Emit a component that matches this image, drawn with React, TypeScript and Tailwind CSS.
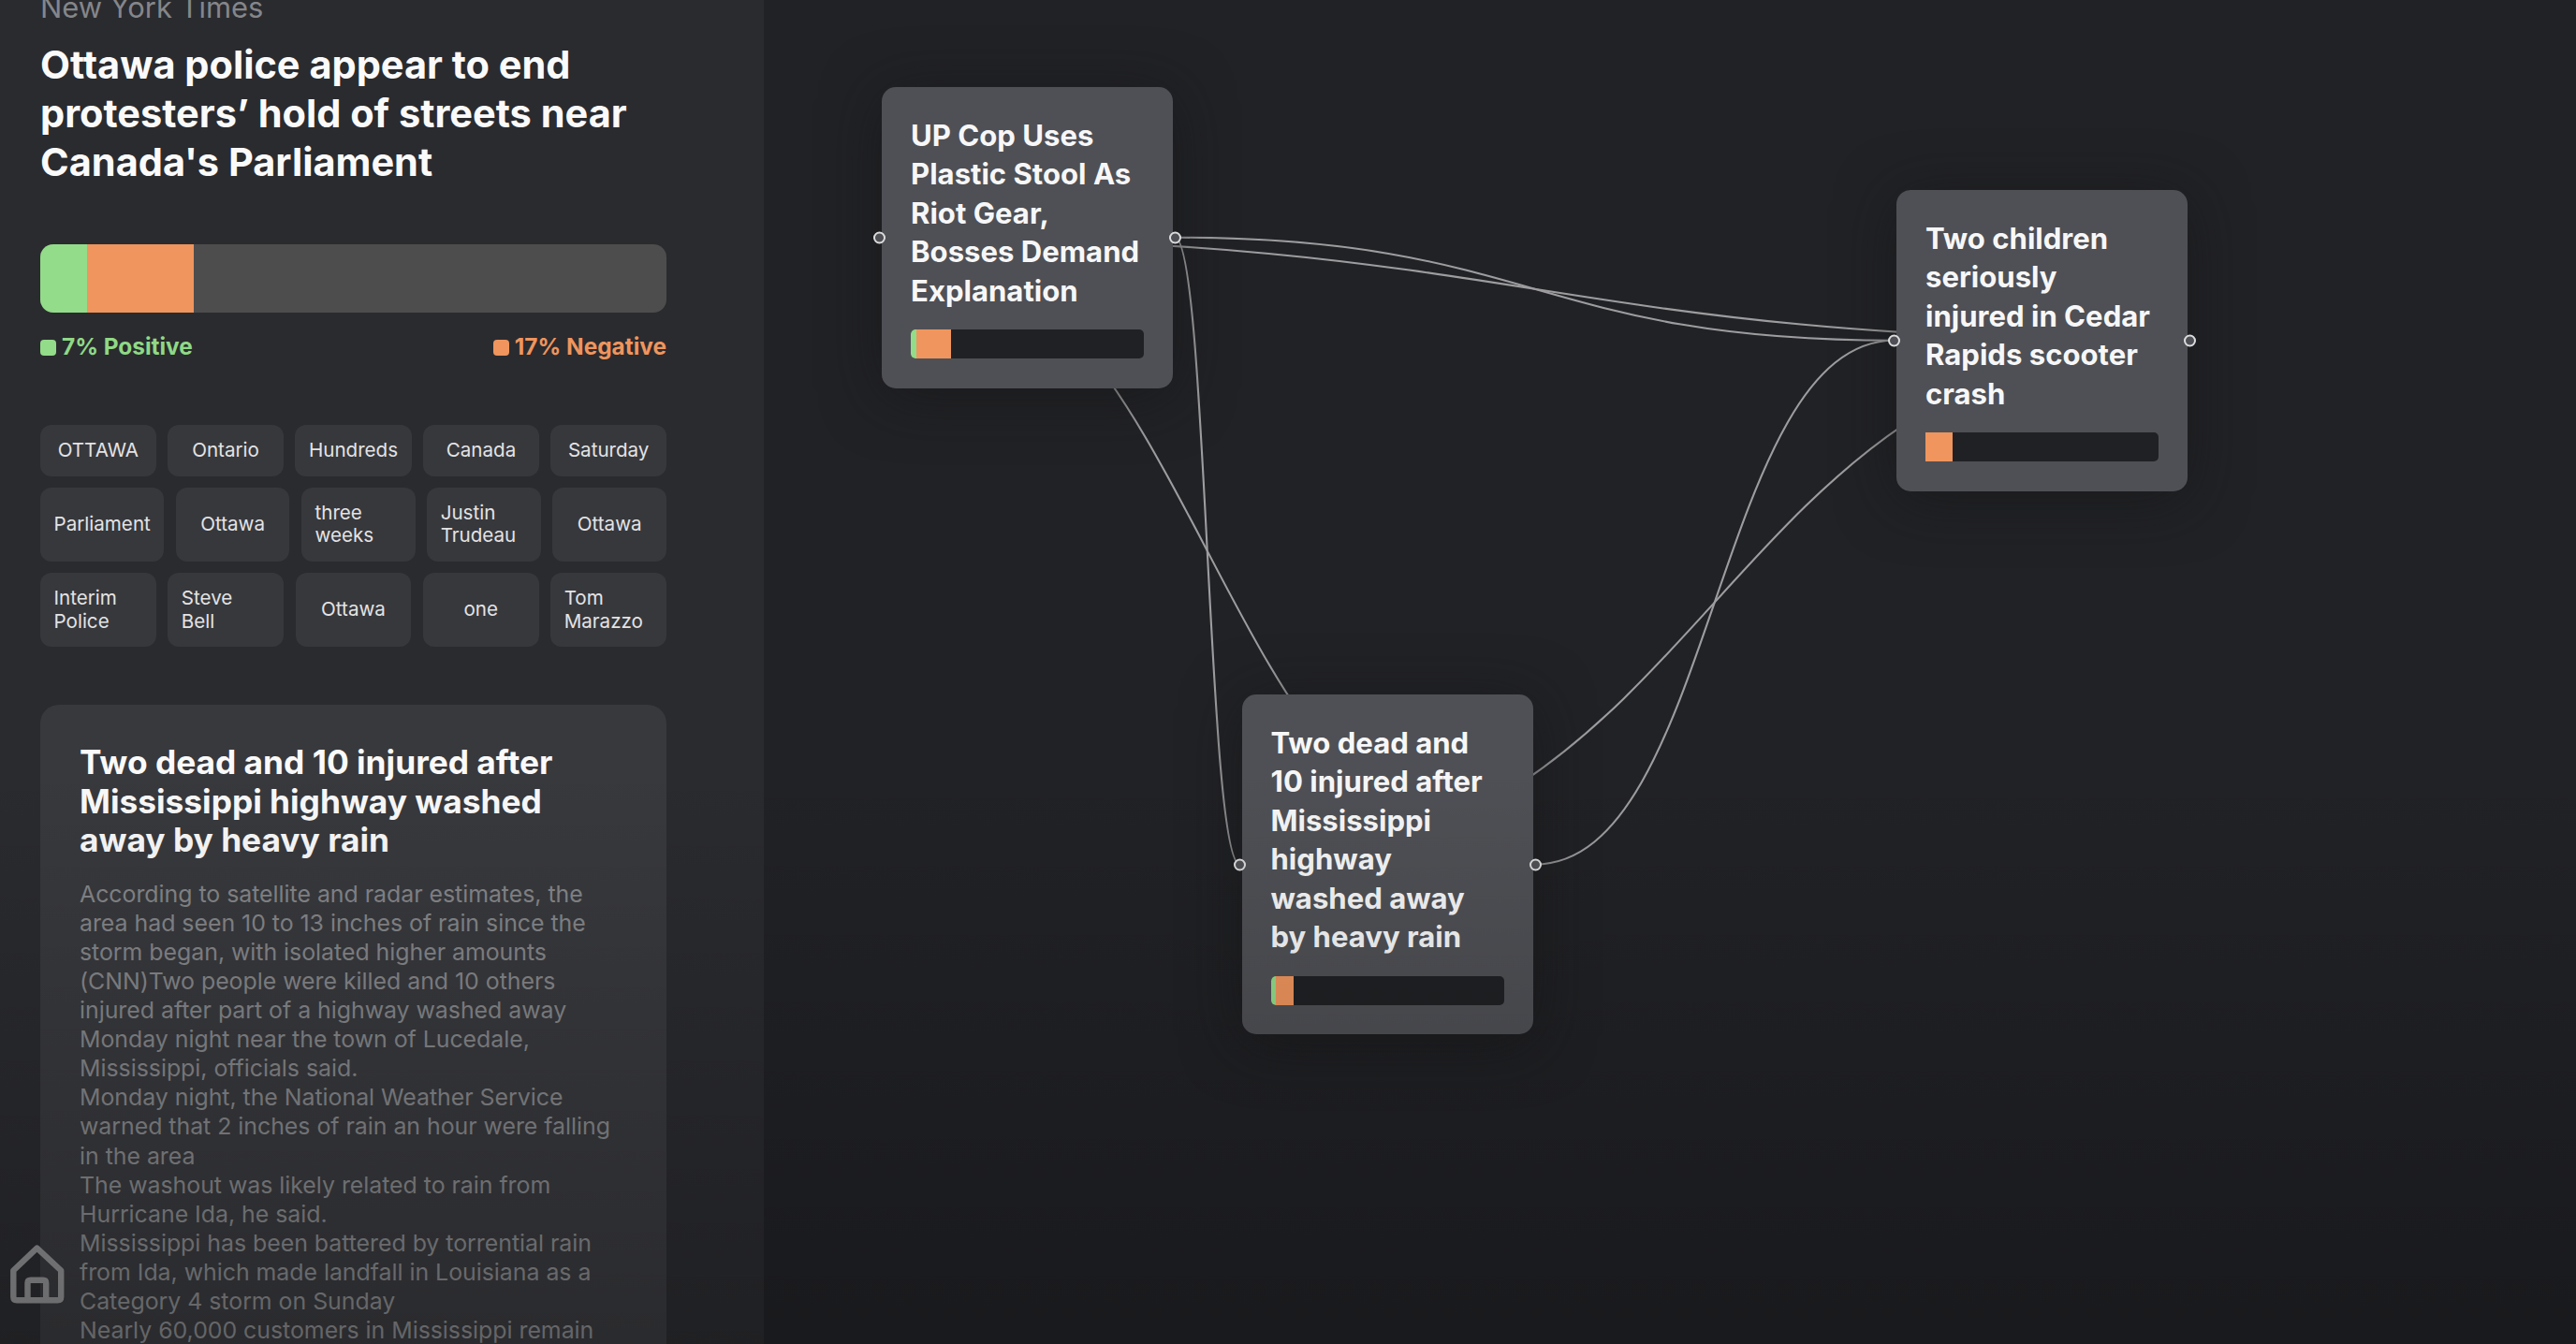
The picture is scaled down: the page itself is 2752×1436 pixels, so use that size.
import React from "react";

type StoryNode = {
  id: string;
  title: string;
  x: number;
  y: number;
  height: number;
  positive: number;
  negative: number;
};

const tagRows = [
  ["OTTAWA", "Ontario", "Hundreds", "Canada", "Saturday"],
  ["Parliament", "Ottawa", "three weeks", "Justin Trudeau", "Ottawa"],
  ["Interim Police", "Steve Bell", "Ottawa", "one", "Tom Marazzo"],
];

const summary = [
  "According to satellite and radar estimates, the area had seen 10 to 13 inches of rain since the storm began, with isolated higher amounts",
  "(CNN)Two people were killed and 10 others injured after part of a highway washed away Monday night near the town of Lucedale, Mississippi, officials said.",
  "Monday night, the National Weather Service warned that 2 inches of rain an hour were falling in the area",
  "The washout was likely related to rain from Hurricane Ida, he said.",
  "Mississippi has been battered by torrential rain from Ida, which made landfall in Louisiana as a Category 4 storm on Sunday",
  "Nearly 60,000 customers in Mississippi remain",
];

const NODE_WIDTH = 311;

const nodes: StoryNode[] = [
  {
    id: "stool",
    title: "UP Cop Uses Plastic Stool As Riot Gear, Bosses Demand Explanation",
    x: 942,
    y: 93,
    height: 321.5,
    positive: 2.4,
    negative: 14.7,
  },
  {
    id: "scooter",
    title: "Two children seriously injured in Cedar Rapids scooter crash",
    x: 2026,
    y: 203,
    height: 321.5,
    positive: 0,
    negative: 11.7,
  },
  {
    id: "highway",
    title: "Two dead and 10 injured after Mississippi highway washed away by heavy rain",
    x: 1326.5,
    y: 742,
    height: 363,
    positive: 2.2,
    negative: 7.7,
  },
];

const links = [
  ["stool", "scooter"],
  ["stool", "highway"],
  ["scooter", "stool"],
  ["scooter", "highway"],
  ["highway", "stool"],
  ["highway", "scooter"],
];

// bezier from the right handle of the source to the left handle of the target
function edgePath(from: string, to: string) {
  const a = nodes.find((n) => n.id === from)!;
  const b = nodes.find((n) => n.id === to)!;
  const sx = a.x + NODE_WIDTH + 2;
  const sy = a.y + a.height / 2;
  const tx = b.x - 2;
  const ty = b.y + b.height / 2;
  const mid = (sx + tx) / 2;
  return `M${sx},${sy} C${mid},${sy} ${mid},${ty} ${tx},${ty}`;
}

function NodeCard({ node }: { node: StoryNode }) {
  return (
    <div
      className="absolute flex w-[311px] flex-col rounded-[15px] bg-[#4f5055] px-[31px] pt-[31.5px] shadow-[0_8px_62px_rgba(22,22,22,0.6)]"
      style={{ left: node.x, top: node.y, height: node.height }}
    >
      <h3 className="text-[31.1px] leading-[41.5px] font-bold text-[#f7f7f8]">
        {node.title}
      </h3>
      <div className="mt-[20px] flex h-[31px] shrink-0 rounded-[5px] bg-[#202124]">
        <div
          className="rounded-l-[5px] bg-[#93dc8a]"
          style={{ width: `${node.positive}%` }}
        />
        <div className="bg-[#ef955d]" style={{ width: `${node.negative}%` }} />
      </div>
      <span className="absolute top-1/2 -left-[9px] size-[13px] -translate-y-1/2 rounded-full border-[2.5px] border-[#dcdcdd] bg-[#4f5055]" />
      <span className="absolute top-1/2 -right-[9px] size-[13px] -translate-y-1/2 rounded-full border-[2.5px] border-[#dcdcdd] bg-[#4f5055]" />
    </div>
  );
}

function Sidebar() {
  return (
    <aside className="w-[816px] shrink-0 overflow-hidden bg-[#2a2b2f] pl-[43px]">
      <div className="-mt-[12px] w-[669px]">
        <p className="text-[30.9px] leading-[39px] text-[#85868a]">
          New York Times
        </p>
        <h1 className="mt-[17px] text-[41.5px] leading-[51.9px] font-bold text-[#fafafa]">
          Ottawa police appear to end protesters’ hold of streets near Canada's
          Parliament
        </h1>

        <div className="mt-[61.5px] flex h-[73px] overflow-hidden rounded-[14px] bg-[#4d4d4d]">
          <div className="w-[50px] bg-[#93dc8a]" />
          <div className="w-[114px] bg-[#ef955d]" />
        </div>
        <div className="mt-[21px] flex justify-between text-[24.4px] leading-[31px] font-bold">
          <span className="flex items-center gap-[6px] text-[#8fd986]">
            <i className="mt-[2px] size-[17px] rounded-[4px] bg-[#93dc8a]" />
            7% Positive
          </span>
          <span className="flex items-center gap-[6px] text-[#ef955d]">
            <i className="mt-[2px] size-[17px] rounded-[4px] bg-[#ef955d]" />
            17% Negative
          </span>
        </div>

        <div className="mt-[68px] flex flex-col gap-[12px]">
          {tagRows.map((row, i) => (
            <div key={i} className="flex gap-[12.5px]">
              {row.map((tag, j) => (
                <div
                  key={j}
                  className="flex flex-1 items-center justify-center rounded-[12px] bg-[#37383c] px-[14.5px] py-[15px] text-[20.6px] leading-[24.6px] text-[#e3e3e4]"
                >
                  {tag}
                </div>
              ))}
            </div>
          ))}
        </div>

        <article className="mt-[62px] h-[760px] rounded-[20px] bg-[#38393d] px-[42px] pt-[41px]">
          <h2 className="text-[35.3px] leading-[41.5px] font-bold text-[#fafafa]">
            Two dead and 10 injured after Mississippi highway washed away by
            heavy rain
          </h2>
          <div className="mt-[21px] text-[24.9px] leading-[31.1px] tracking-[-0.03px] text-[#858689]">
            {summary.map((line) => (
              <p key={line}>{line}</p>
            ))}
          </div>
        </article>
      </div>
    </aside>
  );
}

function HomeIcon() {
  return (
    <svg
      className="absolute top-[1326px] left-[8px] h-[70px] w-[64px]"
      viewBox="8 1326 64 70"
      fill="none"
      stroke="#8d8e90"
      strokeWidth="6.4"
      strokeLinejoin="round"
    >
      <path d="M39.5 1333.5 L65.2 1357.5 V1385.5 Q65.2 1389.3 61.4 1389.3 H18 Q14.3 1389.3 14.3 1385.5 V1357.5 Z" />
      <path d="M29.5 1389.3 V1371 Q29.5 1367.8 32.7 1367.8 H46 Q49.2 1367.8 49.2 1371 V1389.3" />
    </svg>
  );
}

export default function App() {
  return (
    <div className="relative flex h-screen w-full overflow-hidden bg-[#212226] font-['Inter',sans-serif]">
      <Sidebar />
      <main className="flex-1" />

      <svg
        className="absolute inset-0 h-full w-full"
        fill="none"
        stroke="#9d9d9f"
        strokeWidth="2.1"
      >
        {links.map(([from, to]) => (
          <path key={from + to} d={edgePath(from, to)} />
        ))}
      </svg>
      {nodes.map((node) => (
        <NodeCard key={node.id} node={node} />
      ))}

      <HomeIcon />
      <div className="pointer-events-none absolute inset-x-0 bottom-0 h-[620px] bg-linear-to-b from-black/0 to-black/25" />
    </div>
  );
}
